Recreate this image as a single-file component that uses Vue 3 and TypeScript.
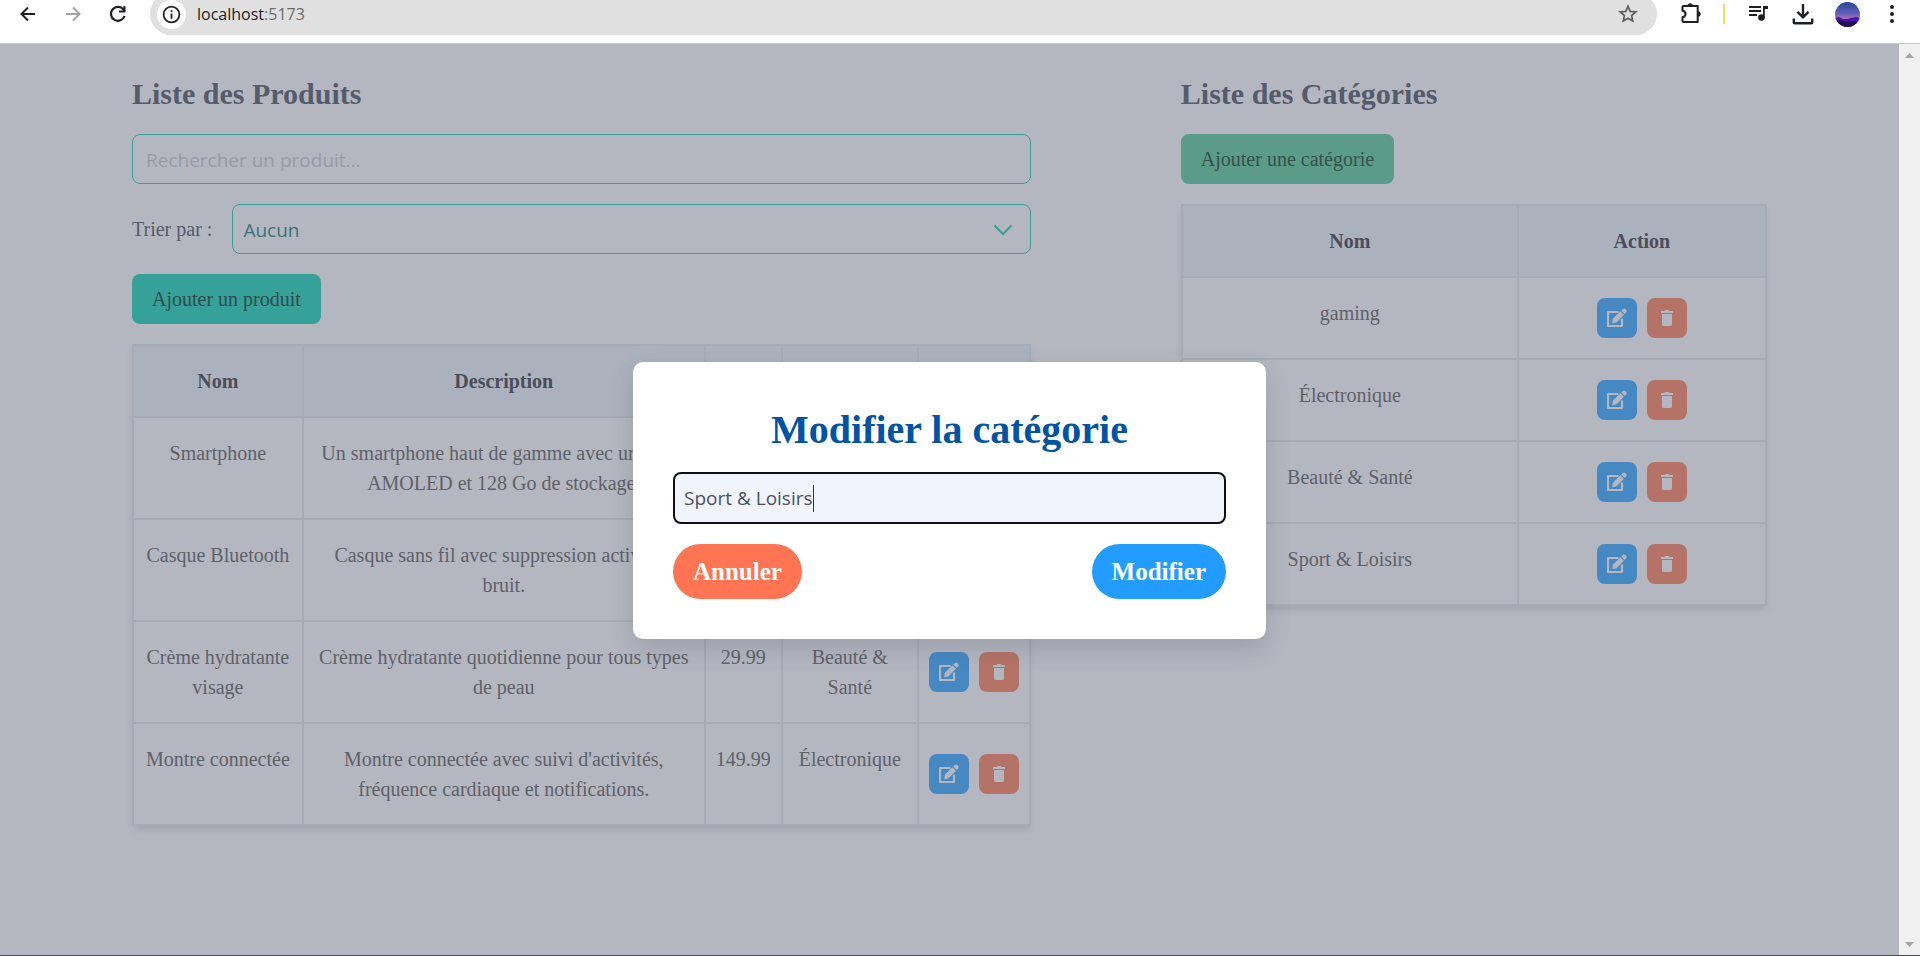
<script setup lang="ts">
import { ref } from 'vue'

interface Product {
  name: string
  description: string
  price: string
  category: string
}

const products: Product[] = [
  {
    name: 'Smartphone',
    description: 'Un smartphone haut de gamme avec un écran AMOLED et 128 Go de stockage.',
    price: '699.99',
    category: 'Électronique',
  },
  {
    name: 'Casque Bluetooth',
    description: 'Casque sans fil avec suppression active de bruit.',
    price: '199.99',
    category: 'Électronique',
  },
  {
    name: 'Crème hydratante visage',
    description: 'Crème hydratante quotidienne pour tous types de peau',
    price: '29.99',
    category: 'Beauté & Santé',
  },
  {
    name: 'Montre connectée',
    description: "Montre connectée avec suivi d'activités, fréquence cardiaque et notifications.",
    price: '149.99',
    category: 'Électronique',
  },
]

const categories: string[] = ['gaming', 'Électronique', 'Beauté & Santé', 'Sport & Loisirs']

const search = ref('')
const sort = ref('none')
const categoryName = ref('Sport & Loisirs')
</script>

<template>
  <div class="window">
    <svg class="sprite" aria-hidden="true">
      <symbol id="icon-edit" viewBox="0 0 20 20">
        <path d="M11.5 4H1v14h14v-7.5" fill="none" stroke="currentColor" stroke-width="2.2" stroke-linejoin="round" />
        <path d="M13.300 3.200l3.600 3.600-7.500 7.600-4.200.8.600-4.400z" fill="currentColor" />
        <path d="M14.200 2.500L16 .9q1.200-.9 2.300.1l.9.900q1 1.200 0 2.300l-1.600 1.700z" fill="currentColor" />
      </symbol>
      <symbol id="icon-trash" viewBox="0 0 20 20">
        <path d="M4 3h3.500q.5-1 1.500-1h2q1 0 1.500 1H16v2H4z" fill="currentColor" />
        <path d="M5 6h10v10.500q0 1.500-1.500 1.500h-7Q5 18 5 16.500z" fill="currentColor" />
      </symbol>
    </svg>

    <header class="toolbar">
      <nav class="nav-buttons">
        <button class="tool" type="button" aria-label="Précédent">
          <svg viewBox="0 0 24 24"><path d="M19 12H6M12 5.500L5.500 12l6.500 6.500" fill="none" stroke="currentColor" stroke-width="2" /></svg>
        </button>
        <button class="tool tool-off" type="button" aria-label="Suivant">
          <svg viewBox="0 0 24 24"><path d="M5 12h13M12 5.500l6.500 6.500-6.500 6.500" fill="none" stroke="currentColor" stroke-width="2" /></svg>
        </button>
        <button class="tool" type="button" aria-label="Actualiser">
          <svg viewBox="0 0 24 24">
            <path d="M18.600 14A7 7 0 1 1 17.500 7.500L18.500 9" fill="none" stroke="currentColor" stroke-width="2.200" />
            <path d="M19.500 4v6.500H13V8.400h4.400V4z" fill="currentColor" />
          </svg>
        </button>
      </nav>
      <div class="address">
        <button class="site-info" type="button" aria-label="Informations du site">
          <svg viewBox="0 0 20 20">
            <circle cx="10" cy="10" r="7.500" fill="none" stroke="currentColor" stroke-width="1.700" />
            <path d="M10 9v5M10 6v1.700" stroke="currentColor" stroke-width="1.700" />
          </svg>
        </button>
        <span class="url">localhost<span class="port">:5173</span></span>
        <button class="tool star" type="button" aria-label="Ajouter aux favoris">
          <svg viewBox="0 0 24 24">
            <path d="M12 4.200l2.200 5.200 5.600.5-4.200 3.700 1.200 5.500-4.800-2.900-4.800 2.900 1.200-5.500-4.200-3.700 5.600-.5z" fill="none" stroke="currentColor" stroke-width="1.700" />
          </svg>
        </button>
      </div>
      <button class="tool" type="button" aria-label="Extensions">
        <svg viewBox="0 0 24 24">
          <path d="M4.500 4h14.200v16H4.500q-1 0-1-1v-3.700q3-.7 3-3.300t-3-3.300V5q0-1 1-1z" fill="none" stroke="currentColor" stroke-width="2" stroke-linejoin="round" />
          <path d="M8.500 4a2.700 2.700 0 0 1 5.400 0zM19 9.300a2.700 2.700 0 0 1 0 5.400z" fill="currentColor" />
        </svg>
      </button>
      <span class="marker"></span>
      <button class="tool" type="button" aria-label="Contrôle des médias">
        <svg viewBox="0 0 24 24">
          <path d="M2 5h12M2 9h12M2 13h8" stroke="currentColor" stroke-width="2" />
          <circle cx="14.500" cy="15.500" r="3.300" fill="currentColor" />
          <path d="M16 4h5v3h-3.200v8.500H16z" fill="currentColor" />
        </svg>
      </button>
      <button class="tool" type="button" aria-label="Téléchargements">
        <svg viewBox="0 0 24 24">
          <path d="M12 2v13M6.500 9.800l5.500 5.500 5.500-5.500M2.800 16.500v4q0 .8.800.8h16.800q.8 0 .8-.8v-4" fill="none" stroke="currentColor" stroke-width="2.400" />
        </svg>
      </button>
      <button class="avatar" type="button" aria-label="Profil">
        <svg viewBox="0 0 25 25">
          <defs>
            <linearGradient id="sky" x1="0" y1="0" x2="0" y2="1">
              <stop offset="0" stop-color="#274799" />
              <stop offset="0.450" stop-color="#5f5fb5" />
              <stop offset="0.650" stop-color="#a56fae" />
            </linearGradient>
            <clipPath id="disc"><circle cx="12.500" cy="12.500" r="12.500" /></clipPath>
          </defs>
          <g clip-path="url(#disc)">
            <rect width="25" height="25" fill="url(#sky)" />
            <path d="M0 16l4-1 4 2 4 0 4-1 5-1 4 1v9H0z" fill="#4b12b4" />
            <path d="M0 20l6-2 6 2 6-1 7 1v5H0z" fill="#20124e" />
          </g>
        </svg>
      </button>
      <button class="tool" type="button" aria-label="Menu">
        <svg viewBox="0 0 24 24" fill="currentColor">
          <circle cx="12" cy="5" r="2" /><circle cx="12" cy="12" r="2" /><circle cx="12" cy="19" r="2" />
        </svg>
      </button>
    </header>

    <div class="viewport">
      <div class="stage">
        <main class="columns">
          <section>
            <h2>Liste des Produits</h2>
            <input v-model="search" class="field search" type="search" placeholder="Rechercher un produit..." aria-label="Rechercher un produit" />
            <div class="sort-row">
              <label for="sort">Trier par :</label>
              <div class="select-wrap">
                <select id="sort" v-model="sort" class="field sort">
                  <option value="none">Aucun</option>
                  <option value="name">Nom</option>
                  <option value="price">Prix</option>
                </select>
                <svg class="chevron" viewBox="0 0 20 12"><path d="M1.500 1.500L10 10l8.500-8.500" fill="none" stroke="currentColor" stroke-width="2" /></svg>
              </div>
            </div>
            <button class="add add-product" type="button">Ajouter un produit</button>
            <table class="product-table">
              <colgroup>
                <col class="c-name" /><col class="c-description" /><col class="c-price" /><col class="c-category" /><col class="c-action" />
              </colgroup>
              <thead>
                <tr><th>Nom</th><th>Description</th><th>Prix</th><th>Catégorie</th><th>Action</th></tr>
              </thead>
              <tbody>
                <tr v-for="p in products" :key="p.name">
                  <td>{{ p.name }}</td>
                  <td>{{ p.description }}</td>
                  <td>{{ p.price }}</td>
                  <td>{{ p.category }}</td>
                  <td class="action-cell">
                    <div class="actions">
                      <button class="act edit" type="button" :aria-label="`Modifier ${p.name}`"><svg><use href="#icon-edit" /></svg></button>
                      <button class="act remove" type="button" :aria-label="`Supprimer ${p.name}`"><svg><use href="#icon-trash" /></svg></button>
                    </div>
                  </td>
                </tr>
              </tbody>
            </table>
          </section>

          <section>
            <h2>Liste des Catégories</h2>
            <button class="add add-category" type="button">Ajouter une catégorie</button>
            <table>
              <colgroup><col class="c-category-name" /><col /></colgroup>
              <thead>
                <tr><th>Nom</th><th>Action</th></tr>
              </thead>
              <tbody>
                <tr v-for="c in categories" :key="c">
                  <td>{{ c }}</td>
                  <td class="action-cell">
                    <div class="actions">
                      <button class="act edit" type="button" :aria-label="`Modifier ${c}`"><svg><use href="#icon-edit" /></svg></button>
                      <button class="act remove" type="button" :aria-label="`Supprimer ${c}`"><svg><use href="#icon-trash" /></svg></button>
                    </div>
                  </td>
                </tr>
              </tbody>
            </table>
          </section>
        </main>

        <div class="overlay">
          <form class="modal" role="dialog" aria-labelledby="modal-title" @submit.prevent>
            <h1 id="modal-title">Modifier la catégorie</h1>
            <div class="name-box">
              <input v-model="categoryName" type="text" aria-label="Nom de la catégorie" />
              <span class="caret"></span>
            </div>
            <div class="modal-actions">
              <button class="pill cancel" type="button">Annuler</button>
              <button class="pill confirm" type="submit">Modifier</button>
            </div>
          </form>
        </div>
      </div>
      <div class="scrollbar" aria-hidden="true">
        <svg viewBox="0 0 9 5"><path d="M0 5L4.500 0 9 5z" fill="#a3a3a3" /></svg>
        <svg viewBox="0 0 9 5"><path d="M0 0l4.500 5L9 0z" fill="#a3a3a3" /></svg>
      </div>
    </div>
  </div>
</template>

<style>
body {
  margin: 0;
}
</style>

<style scoped>
.window {
  display: flex;
  flex-direction: column;
  min-height: 100vh;
  overflow: hidden;
  box-sizing: border-box;
  border-bottom: 1px solid #4b4b50;
  font-family: "Liberation Serif", "Times New Roman", serif;
  font-size: 20px;
  line-height: 30px;
  background: #b4b7c0;
}

.window *,
.window *::before {
  box-sizing: border-box;
}

button,
input,
select {
  margin: 0;
  padding: 0;
  border: 0;
  background: none;
  font: inherit;
  color: inherit;
}

.sprite {
  position: absolute;
  width: 0;
  height: 0;
}

.toolbar {
  display: flex;
  align-items: center;
  gap: 20px;
  height: 44px;
  padding: 0 16px 15px;
  overflow: hidden;
  background: #fff;
  border-bottom: 1px solid #c9cbcd;
  color: #1f2023;
}

.nav-buttons {
  display: flex;
  gap: 21px;
}

.tool {
  flex: none;
  width: 24px;
  height: 24px;
}

.tool svg,
.avatar svg,
.site-info svg {
  display: block;
  width: 100%;
  height: 100%;
}

.tool-off {
  color: #a2a3a5;
}

.address {
  flex: 1;
  display: flex;
  align-items: center;
  height: 42px;
  margin-right: 2px;
  padding: 0 17px 0 7px;
  border-radius: 21px;
  background: #e0e0e0;
}

.site-info {
  width: 29px;
  height: 29px;
  padding: 4px;
  border-radius: 50%;
  background: #fff;
}

.url {
  flex: 1;
  margin-left: 11px;
  font-family: "Open Sans", "Noto Sans", sans-serif;
  font-size: 16px;
}

.port {
  color: #6b6c6f;
}

.star {
  color: #5c5d60;
}

.marker {
  width: 2px;
  height: 20px;
  margin-right: 2px;
  background: #fbd75b;
}

.avatar {
  flex: none;
  width: 25px;
  height: 25px;
}

.viewport {
  flex: 1;
  display: flex;
}

.stage {
  position: relative;
  flex: 1;
  display: flex;
}

.scrollbar {
  display: flex;
  flex-direction: column;
  justify-content: space-between;
  align-items: center;
  width: 21px;
  padding: 9px 0 8px;
  background: #f0f0f0;
}

.scrollbar svg {
  width: 9px;
  height: 5px;
}

.columns {
  flex: 1;
  display: grid;
  grid-template-columns: 23fr 15fr;
  gap: 150px;
  padding: 30px 132px;
  color: #555b6b;
}

h2 {
  margin: 0 0 20px;
  font-size: 30px;
  line-height: 40px;
}

.field {
  display: block;
  width: 100%;
  height: 50px;
  border: 1px solid #36a199;
  border-radius: 8px;
  outline: none;
  appearance: none;
  font-family: "Open Sans", "Noto Sans", sans-serif;
  font-size: 19px;
}

.search {
  padding: 2px 13px 0;
}

.search::placeholder {
  color: #989ba5;
  opacity: 1;
}

.sort-row {
  display: flex;
  align-items: center;
  gap: 20px;
  margin: 20px 0;
}

.select-wrap {
  position: relative;
  flex: 1;
}

.sort {
  padding: 2px 10px 0;
  color: #3a7476;
}

.chevron {
  position: absolute;
  right: 18px;
  top: 20px;
  width: 20px;
  height: 12px;
  color: #36a199;
  pointer-events: none;
}

.add {
  display: block;
  height: 50px;
  margin-bottom: 20px;
  padding: 0 20px;
  border-radius: 8px;
}

.add-product {
  background: #36a199;
  color: #2e4d50;
}

.add-category {
  background: #5a9c87;
  color: #37504e;
}

table {
  width: 100%;
  table-layout: fixed;
  border-collapse: collapse;
  box-shadow: 0 5px 7px -2px rgba(90, 95, 110, 0.22);
}

th,
td {
  padding: 20px 10px;
  border: 2px solid #a7abb5;
  text-align: center;
  vertical-align: top;
}

th {
  background: #abb2be;
  color: #4b4e5a;
}

td {
  color: #5f6168;
}

.c-name { width: 19%; }
.c-description { width: 45%; }
.c-price { width: 77px; }
.c-category { width: 136px; }
.c-action { width: 112px; }
.c-category-name { width: 336px; }

.product-table th:nth-child(n + 3),
.product-table td:nth-child(n + 3) {
  padding-inline: 8px;
}

.action-cell {
  vertical-align: middle;
}

.actions {
  display: flex;
  justify-content: center;
  gap: 10px;
}

.act {
  flex: none;
  display: grid;
  place-items: center;
  width: 40px;
  height: 40px;
  border-radius: 8px;
  color: #b4b7c0;
}

.act svg {
  width: 20px;
  height: 20px;
}

.edit {
  background: #4588c2;
}

.remove {
  background: #b57367;
}

.overlay {
  position: absolute;
  inset: 0;
  display: grid;
  place-items: center;
  padding-top: 2px;
}

.modal {
  width: 33.333%;
  padding: 40px;
  border-radius: 10px;
  background: #fff;
  box-shadow: 0 10px 24px rgba(60, 65, 80, 0.2);
}

h1 {
  margin: 0 0 15px;
  font-size: 40px;
  line-height: 55px;
  text-align: center;
  color: #0054a6;
}

.name-box {
  display: flex;
  align-items: center;
  height: 52px;
  padding: 0 9px;
  border: 2px solid #101010;
  border-radius: 8px;
  background: #f1f4fd;
}

.name-box input {
  field-sizing: content;
  max-width: 100%;
  outline: none;
  font-family: "Open Sans", "Noto Sans", sans-serif;
  font-size: 19px;
  color: #4b5160;
}

.caret {
  width: 1px;
  height: 27px;
  background: #30343e;
}

.modal-actions {
  display: flex;
  justify-content: space-between;
  margin-top: 20px;
}

.pill {
  height: 55px;
  padding: 0 20px;
  border-radius: 28px;
  font-size: 25px;
  font-weight: bold;
  color: #fff;
}

.cancel {
  background: #ff7452;
}

.confirm {
  background: #229cff;
}
</style>
